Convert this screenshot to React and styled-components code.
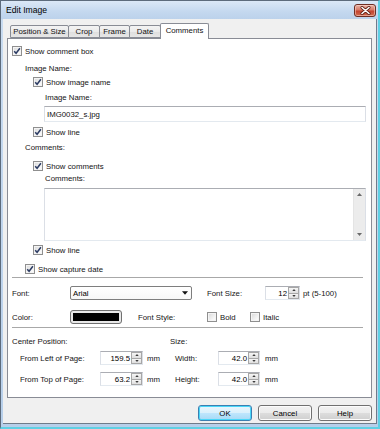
import React from 'react';
import styled, { createGlobalStyle } from 'styled-components';

const Global = createGlobalStyle`
  html, body { margin: 0; padding: 0; background: #ffffff; }
  * { box-sizing: border-box; }
`;

const Window = styled.div`
  width: 380px;
  height: 429px;
  display: flex;
  flex-direction: column;
  background: linear-gradient(#c9dcf1, #b7cfea);
  border-top: 1px solid #5d6b7c;
  border-left: 1px solid #5d6b7c;
  border-right: 2px solid #5fd0e4;
  border-bottom: 2px solid #5fd0e4;
  font-family: "Liberation Sans", Arial, sans-serif;
  font-size: 7.8px;
  color: #141414;
`;

const TitleBar = styled.div`
  height: 18px;
  flex: none;
  display: flex;
  align-items: center;
  justify-content: space-between;
  padding: 0 2px 0 5px;
  background: linear-gradient(#dbe8f7, #c4d8ef 60%, #bcd2eb);
`;

const Title = styled.span`
  font-size: 8.6px;
  color: #000;
`;

const CloseBtn = styled.div`
  width: 22px;
  height: 13px;
  border: 1px solid #6e2e24;
  border-radius: 3px;
  background: linear-gradient(#e8b2a6, #d77a68 45%, #c4432f 55%, #cf6b4f);
  display: flex;
  align-items: center;
  justify-content: center;
  box-shadow: inset 0 0 0 1px rgba(255, 220, 210, 0.5);
`;

const Client = styled.div`
  flex: 1;
  margin: 0 1px 3px 2px;
  background: #f0f0f0;
  border-right: 1px solid #6f7b8a;
  border-bottom: 1px solid #6f7b8a;
  display: flex;
  flex-direction: column;
`;

const TabStrip = styled.div`
  height: 19px;
  flex: none;
  display: flex;
  align-items: flex-end;
  padding-left: 7px;
`;

const Tab = styled.div`
  width: ${p => p.$w}px;
  height: ${p => (p.$active ? 16 : 13)}px;
  margin-bottom: ${p => (p.$active ? -1 : 0)}px;
  margin-right: -1px;
  border: 1px solid #898c95;
  border-bottom: ${p => (p.$active ? 'none' : '1px solid #898c95')};
  border-radius: 2px 2px 0 0;
  background: ${p => (p.$active ? '#ffffff' : 'linear-gradient(#f3f3f3, #ebebeb 50%, #dedede 51%, #e6e6e6)')};
  display: flex;
  align-items: center;
  justify-content: center;
  padding-bottom: ${p => (p.$active ? 2 : 0)}px;
  position: relative;
  z-index: ${p => (p.$active ? 2 : 1)};
  color: #111;
`;

const Panel = styled.div`
  height: 360px;
  flex: none;
  margin: 0 4px 0 4px;
  border: 1px solid #898c95;
  background: #ffffff;
  padding: 6px 5px 0 4px;
  display: flex;
  flex-direction: column;
`;

const Row = styled.div`
  height: ${p => p.$h || 12}px;
  margin-top: ${p => p.$mt || 0}px;
  padding-left: ${p => p.$indent || 0}px;
  display: flex;
  align-items: center;
  flex: none;
  white-space: nowrap;
`;

const Cell = styled.div`
  width: ${p => (p.$w ? `${p.$w}px` : 'auto')};
  margin-left: ${p => p.$ml || 0}px;
  flex: none;
  display: flex;
  align-items: center;
  white-space: nowrap;
`;

const Box = styled.div`
  width: 10px;
  height: 10px;
  flex: none;
  border: 1px solid #8f8f8f;
  background: linear-gradient(135deg, #d8d8d8, #f6f6f6 70%, #ffffff);
  box-shadow: inset 0 0 0 1px #f4f4f4;
  display: flex;
  align-items: center;
  justify-content: center;
  margin-right: 3px;
`;

const Separator = styled.div`
  height: 1px;
  flex: none;
  margin-top: ${p => p.$mt}px;
  margin-right: 3px;
  background: #a8a8a8;
`;

const TextBox = styled.div`
  height: ${p => p.$h}px;
  margin-top: ${p => p.$mt}px;
  margin-left: 32px;
  flex: none;
  border: 1px solid #dbdfe6;
  border-top-color: #abadb3;
  border-bottom-color: #e3e9ef;
  background: #fff;
  display: flex;
  align-items: ${p => (p.$multi ? 'stretch' : 'center')};
  padding-left: ${p => (p.$multi ? 0 : 2)}px;
  color: #111;
`;

const TextFill = styled.div`
  flex: 1;
`;

const ScrollBar = styled.div`
  width: 12px;
  flex: none;
  display: flex;
  flex-direction: column;
  justify-content: space-between;
  align-items: center;
  background: #ececec;
  border-left: 1px solid #e4e4e4;
  padding: 4px 0;
`;

const Select = styled.div`
  width: 122px;
  height: 14px;
  flex: none;
  border: 1px solid #7e7e7e;
  border-radius: 2px;
  background: linear-gradient(#ffffff, #f7f7f7);
  display: flex;
  align-items: center;
  justify-content: space-between;
  padding: 0 3px 0 2px;
  color: #000;
`;

const Spin = styled.div`
  width: ${p => p.$w}px;
  height: 14px;
  flex: none;
  border: 1px solid #dbdfe6;
  border-top-color: #abadb3;
  border-bottom-color: #e3e9ef;
  background: #fff;
  display: flex;
  align-items: stretch;
`;

const SpinValue = styled.div`
  flex: 1;
  display: flex;
  align-items: center;
  justify-content: flex-end;
  padding-right: 1px;
  color: #000;
`;

const SpinButtons = styled.div`
  width: 11px;
  flex: none;
  display: flex;
  flex-direction: column;
`;

const SpinBtn = styled.div`
  flex: 1;
  border: 1px solid #a7a7a7;
  margin-top: ${p => (p.$down ? -1 : 0)}px;
  background: linear-gradient(#f6f6f6, #dedede);
  display: flex;
  align-items: center;
  justify-content: center;
`;

const Swatch = styled.div`
  width: 52px;
  height: 14px;
  flex: none;
  border: 1px solid #707070;
  border-radius: 3px;
  background: #e8e8e8;
  padding: 2px;
  display: flex;
`;

const SwatchFill = styled.div`
  flex: 1;
  background: #000;
`;

const ButtonBar = styled.div`
  display: flex;
  justify-content: flex-end;
  gap: 6px;
  margin-top: 7px;
  padding-right: 4px;
`;

const Button = styled.div`
  width: 54px;
  height: 16px;
  border: 1px solid ${p => (p.$focus ? '#3c7fb1' : '#707070')};
  border-radius: 3px;
  background: ${p => (p.$focus
    ? 'linear-gradient(#eaf6fd, #d9f0fc 50%, #bee6fd 51%, #a7d9f5)'
    : 'linear-gradient(#f2f2f2, #ebebeb 50%, #dddddd 51%, #cfcfcf)')};
  box-shadow: inset 0 0 0 1px ${p => (p.$focus ? '#48d7f9' : '#fcfcfc')};
  display: flex;
  align-items: center;
  justify-content: center;
  color: #000;
`;

const Check = ({ checked }) => (
  <Box>
    {checked && (
      <svg width="8" height="8" viewBox="0 0 8 8">
        <path d="M1.2 4.2 L3.1 6.3 L6.9 1.3" fill="none" stroke="#2b3b63" strokeWidth="1.5" />
      </svg>
    )}
  </Box>
);

const Tri = ({ up, color = '#3a3a3a', w = 5, h = 3 }) => (
  <svg width={w} height={h} viewBox="0 0 5 3">
    <path d={up ? 'M0 3 L2.5 0 L5 3 Z' : 'M0 0 L5 0 L2.5 3 Z'} fill={color} />
  </svg>
);

const Spinner = ({ w, value }) => (
  <Spin $w={w}>
    <SpinValue>{value}</SpinValue>
    <SpinButtons>
      <SpinBtn><Tri up w={4} h={2} /></SpinBtn>
      <SpinBtn $down><Tri w={4} h={2} /></SpinBtn>
    </SpinButtons>
  </Spin>
);

const CheckRow = ({ label, checked = true, indent, mt }) => (
  <Row $indent={indent} $mt={mt}>
    <Check checked={checked} />
    {label}
  </Row>
);

export default function App() {
  return (
    <>
      <Global />
      <Window>
        <TitleBar>
          <Title>Edit Image</Title>
          <CloseBtn>
            <svg width="11" height="9" viewBox="0 0 11 9">
              <path d="M2 1.5 L9 7.5 M9 1.5 L2 7.5" stroke="#5a1c12" strokeWidth="3" strokeLinecap="round" />
              <path d="M2 1.5 L9 7.5 M9 1.5 L2 7.5" stroke="#ffffff" strokeWidth="1.6" strokeLinecap="round" />
            </svg>
          </CloseBtn>
        </TitleBar>
        <Client>
          <TabStrip>
            <Tab $w={59}>Position &amp; Size</Tab>
            <Tab $w={32}>Crop</Tab>
            <Tab $w={31}>Frame</Tab>
            <Tab $w={32}>Date</Tab>
            <Tab $w={49} $active>Comments</Tab>
          </TabStrip>
          <Panel>
            <CheckRow label="Show comment box" indent={0} mt={0} />
            <Row $indent={13} $mt={5}>Image Name:</Row>
            <CheckRow label="Show image name" indent={21} mt={2} />
            <Row $indent={33} $mt={3}>Image Name:</Row>
            <TextBox $h={16} $mt={3}>IMG0032_s.jpg</TextBox>
            <CheckRow label="Show line" indent={21} mt={4} />
            <Row $indent={13} $mt={3}>Comments:</Row>
            <CheckRow label="Show comments" indent={21} mt={7} />
            <Row $indent={33} $mt={0}>Comments:</Row>
            <TextBox $h={53} $mt={4} $multi>
              <TextFill />
              <ScrollBar>
                <Tri up color="#6a6a6a" w={5} h={3} />
                <Tri color="#6a6a6a" w={5} h={3} />
              </ScrollBar>
            </TextBox>
            <CheckRow label="Show line" indent={21} mt={3} />
            <CheckRow label="Show capture date" indent={13} mt={7} />
            <Separator $mt={2} />
            <Row $h={16} $mt={7}>
              <Cell $w={58}>Font:</Cell>
              <Select>
                <span>Arial</span>
                <Tri color="#111" w={6} h={4} />
              </Select>
              <Cell $w={58} $ml={15}>Font Size:</Cell>
              <Spinner w={35} value="12" />
              <Cell $ml={3}>pt (5-100)</Cell>
            </Row>
            <Row $h={16} $mt={8}>
              <Cell $w={58}>Color:</Cell>
              <Swatch><SwatchFill /></Swatch>
              <Cell $w={69} $ml={16}>Font Style:</Cell>
              <Cell $w={43}><Check />Bold</Cell>
              <Cell><Check />Italic</Cell>
            </Row>
            <Separator $mt={2} />
            <Row $mt={7}>
              <Cell $w={158}>Center Position:</Cell>
              <Cell>Size:</Cell>
            </Row>
            <Row $h={16} $mt={3} $indent={8}>
              <Cell $w={80}>From Left of Page:</Cell>
              <Spinner w={43} value="159.5" />
              <Cell $w={28} $ml={4}>mm</Cell>
              <Cell $w={43}>Width:</Cell>
              <Spinner w={42} value="42.0" />
              <Cell $ml={5}>mm</Cell>
            </Row>
            <Row $h={16} $mt={5} $indent={8}>
              <Cell $w={80}>From Top of Page:</Cell>
              <Spinner w={43} value="63.2" />
              <Cell $w={28} $ml={4}>mm</Cell>
              <Cell $w={43}>Height:</Cell>
              <Spinner w={42} value="42.0" />
              <Cell $ml={5}>mm</Cell>
            </Row>
          </Panel>
          <ButtonBar>
            <Button $focus>OK</Button>
            <Button>Cancel</Button>
            <Button>Help</Button>
          </ButtonBar>
        </Client>
      </Window>
    </>
  );
}
